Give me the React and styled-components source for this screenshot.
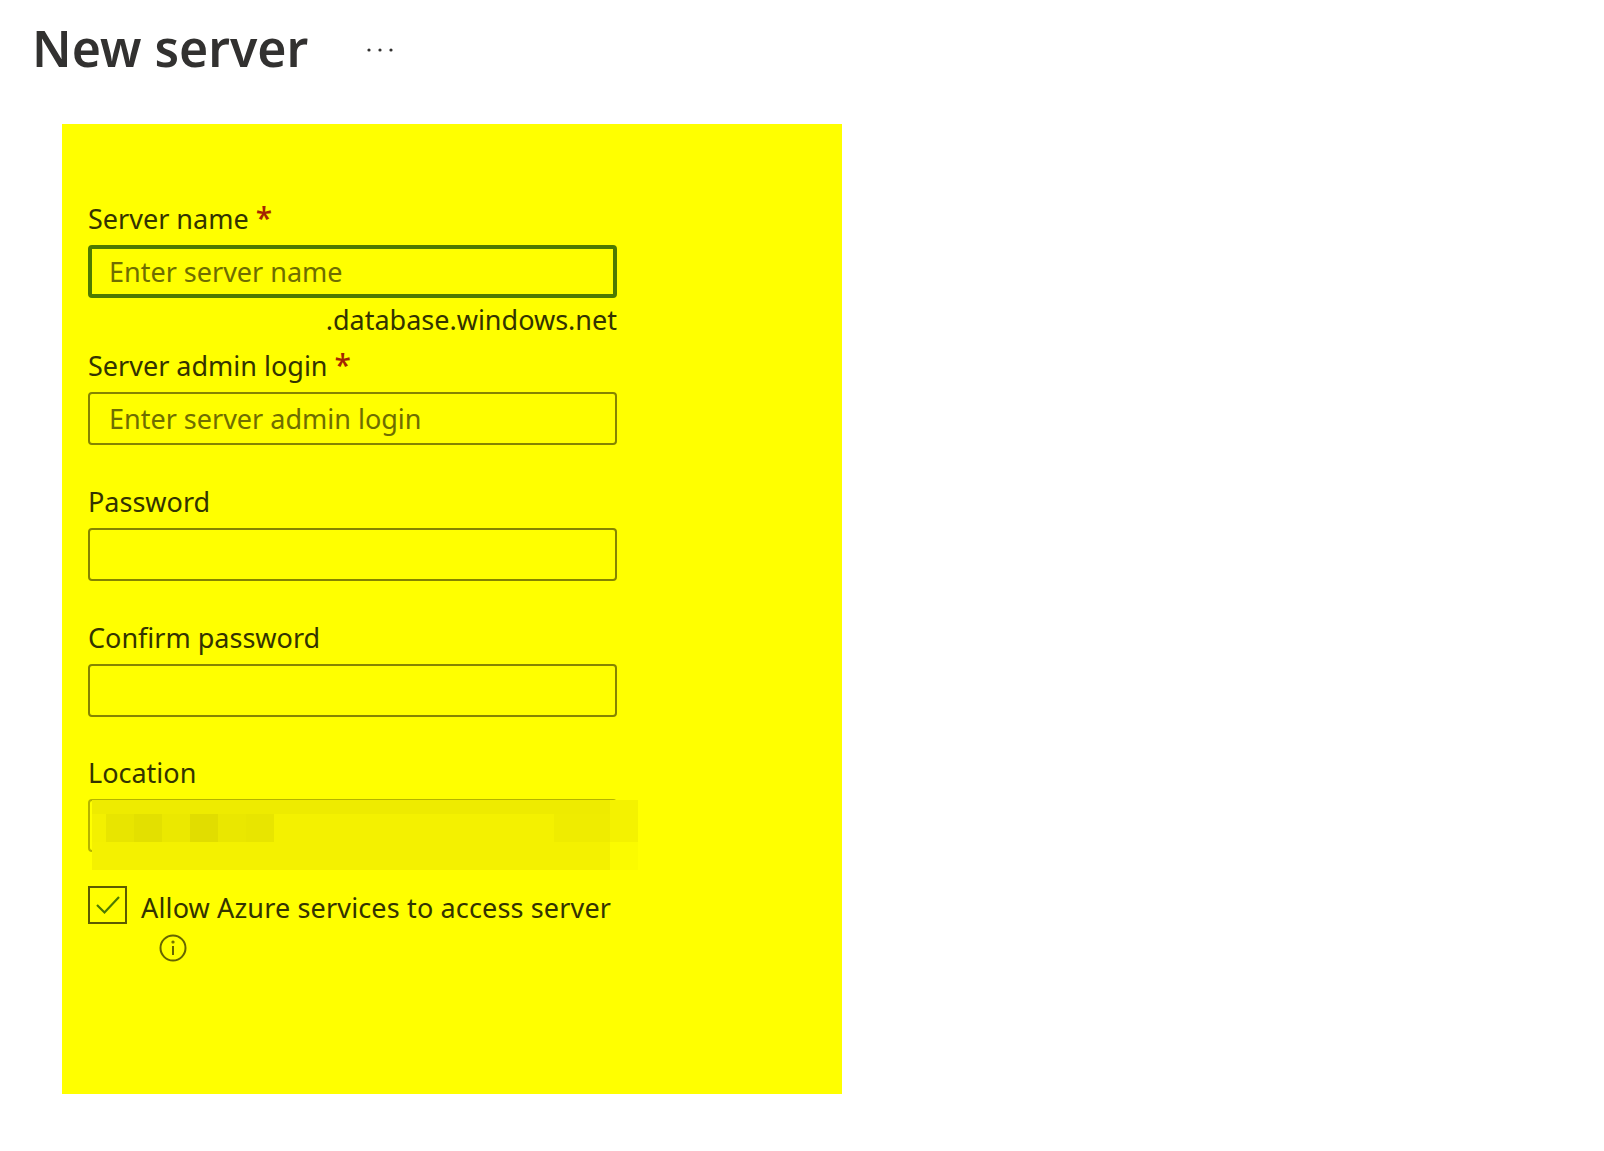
import React from "react";
import styled, { createGlobalStyle } from "styled-components";

const GlobalStyle = createGlobalStyle`
  body {
    margin: 0;
    background: #fff;
    font-family: "Noto Sans", "Open Sans", sans-serif;
    color: #323130;
  }
`;

const Page = styled.div`
  width: 1604px;
  height: 1151px;
`;

const Header = styled.header`
  display: flex;
  align-items: center;
  height: 100px;
  padding-left: 32px;
  margin-bottom: 24px;
  gap: 58px;
`;

const Title = styled.h1`
  margin: 0 0 4px;
  font-size: 50px;
  font-weight: 600;
  line-height: 96px;
  color: #323130;
`;

const MoreDots = styled.svg`
  width: 28px;
  height: 8px;
  fill: #323130;
`;

const Panel = styled.section`
  box-sizing: border-box;
  width: 780px;
  height: 970px;
  margin-left: 62px;
  padding: 79px 0 0 26px;
  background: #ffff00;
`;

const Field = styled.div`
  width: 529px;
  margin-bottom: ${({ $gap }) => $gap ?? 41}px;
`;

const Label = styled.label`
  display: block;
  height: 33px;
  margin-bottom: 9px;
  font-size: 27px;
  line-height: 32px;
  color: #333300;
`;

const Required = styled.span`
  font-size: 30px;
  font-weight: 500;
  line-height: 0;
  color: #a42600;
`;

const Input = styled.input`
  display: block;
  box-sizing: border-box;
  width: 100%;
  height: 53px;
  padding: 0 ${({ $focused }) => ($focused ? 17 : 19)}px;
  border: ${({ $focused }) => ($focused ? "4px solid #4d7a00" : "2px solid #858400")};
  border-radius: 4px;
  outline: none;
  background: transparent;
  font-family: inherit;
  font-size: 27px;
  color: #333300;

  &::placeholder {
    color: #6e6d00;
    opacity: 1;
  }
`;

const Suffix = styled.div`
  height: 52px;
  font-size: 27px;
  line-height: 44px;
  text-align: right;
  color: #333300;
`;

const LocationBox = styled.div`
  position: relative;
  height: 53px;
`;

const LocationInput = styled.div`
  box-sizing: border-box;
  height: 100%;
  border: 2px solid #b5b400;
  border-radius: 4px;
`;

const Mosaic = styled.div`
  position: absolute;
  left: 4px;
  top: 1px;
  display: grid;
  grid-template-columns: 14px repeat(19, 28px);
  grid-template-rows: 14px 28px 28px;
`;

const MosaicCell = styled.div`
  background: ${({ $color }) => $color};
`;

const CheckRow = styled.div`
  display: flex;
  gap: 14px;
  margin-top: 34px;
`;

const CheckBox = styled.div`
  box-sizing: border-box;
  flex: none;
  width: 39px;
  height: 38px;
  border: 2.5px solid #5c5b00;
  display: flex;
  align-items: center;
  justify-content: center;
`;

const CheckColumn = styled.div`
  display: flex;
  flex-direction: column;
  padding-top: 3px;
`;

const CheckText = styled.span`
  font-size: 27px;
  letter-spacing: 0.15px;
  line-height: 38px;
  color: #333300;
  white-space: nowrap;
`;

const InfoIcon = styled.svg`
  width: 28px;
  height: 28px;
  margin: 7px 0 0 18px;
`;

const fill = (n, c) => Array(n).fill(c);

const mosaicColors = [
  ...fill(19, "#eeeb00"), "#f4f200",
  "#f3f000", "#e8e500", "#e3e000", "#ebe800", "#e1dd00", "#eae700", "#e8e500",
  ...fill(10, "#f4f100"), "#efec00", "#efec00", "#f4f200",
  ...fill(19, "#f4f100"), "#fbfb00",
];

export default function App() {
  return (
    <Page>
      <GlobalStyle />
      <Header>
        <Title>New server</Title>
        <MoreDots viewBox="0 0 28 8">
          <circle cx="3" cy="4" r="1.6" />
          <circle cx="14" cy="4" r="1.6" />
          <circle cx="25" cy="4" r="1.6" />
        </MoreDots>
      </Header>
      <Panel>
        <Field $gap={0}>
          <Label>Server name <Required>*</Required></Label>
          <Input $focused placeholder="Enter server name" />
          <Suffix>.database.windows.net</Suffix>
        </Field>
        <Field>
          <Label>Server admin login <Required>*</Required></Label>
          <Input placeholder="Enter server admin login" />
        </Field>
        <Field>
          <Label>Password</Label>
          <Input type="password" />
        </Field>
        <Field $gap={40}>
          <Label>Confirm password</Label>
          <Input type="password" />
        </Field>
        <Field $gap={0}>
          <Label>Location</Label>
          <LocationBox>
            <LocationInput />
            <Mosaic>
              {mosaicColors.map((color, i) => (
                <MosaicCell key={i} $color={color} />
              ))}
            </Mosaic>
          </LocationBox>
        </Field>
        <CheckRow>
          <CheckBox>
            <svg width="26" height="22" viewBox="0 0 26 22" fill="none" stroke="#4d7a00" strokeWidth="2.2">
              <path d="M2 11 L9.5 18.5 L24 3" />
            </svg>
          </CheckBox>
          <CheckColumn>
            <CheckText>Allow Azure services to access server</CheckText>
            <InfoIcon viewBox="0 0 28 28" fill="none" stroke="#666500" strokeWidth="2">
              <circle cx="14" cy="14" r="12.5" />
              <path d="M14 12 V21" />
              <circle cx="14" cy="8" r="0.6" />
            </InfoIcon>
          </CheckColumn>
        </CheckRow>
      </Panel>
    </Page>
  );
}
